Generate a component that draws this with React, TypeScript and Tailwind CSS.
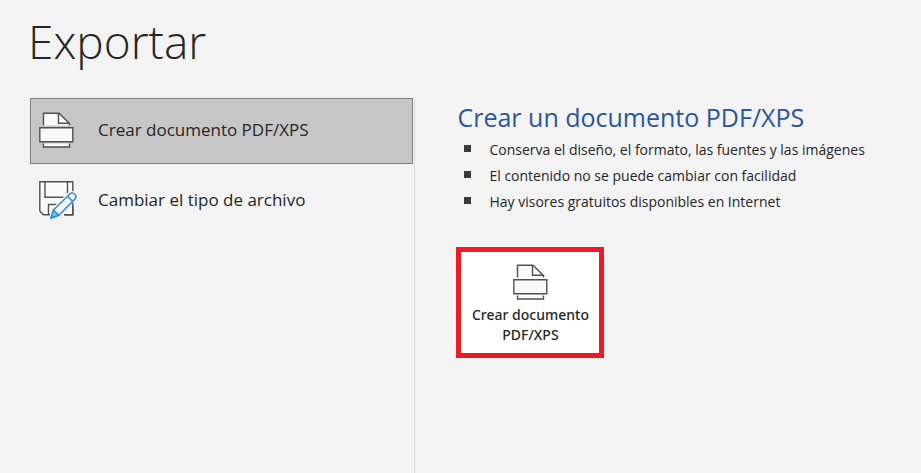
import clsx from 'clsx';
import type { ReactNode } from 'react';

const features = [
  'Conserva el diseño, el formato, las fuentes y las imágenes',
  'El contenido no se puede cambiar con facilidad',
  'Hay visores gratuitos disponibles en Internet',
];

const PrintDocumentIcon = () => (
  <svg
    className="h-9 w-[35px] shrink-0"
    viewBox="0 0 35 36"
    fill="none"
    stroke="#505050"
    strokeWidth="1.4"
    aria-hidden="true"
  >
    <path d="M4.5 13.5V1.2H20L30.5 11.500v2" fill="#fafafa" />
    <path d="M19.500 1.200v10h11" />
    <path d="M0.800 15.700h33v14h-33z" fill="#fafafa" />
    <path d="M4.500 31.500v3.500h26v-3.500" fill="#fafafa" />
  </svg>
);

const SaveAsIcon = () => (
  <svg
    className="h-[38px] w-[38px] shrink-0"
    viewBox="0 0 38 38"
    fill="none"
    aria-hidden="true"
  >
    <g stroke="#505050" strokeWidth="1.4">
      <path d="M0.8 0.8h33v33H4.5L0.8 30z" fill="#fafafa" />
      <path d="M6 0.8v15.5h22.5V0.8" />
      <path d="M9.5 33.5v-10H22" />
    </g>
    {/* clears the disk outline around the pencil */}
    <path d="M10 38l2.500-10L29 11.500q4-3 8.500 0v10L22 38z" fill="#f3f3f3" />
    <path d="M33.800 22v11.800H25" stroke="#505050" strokeWidth="1.4" />
    <g stroke="#2b8fd6" strokeWidth="1.5" strokeLinejoin="round">
      <path
        d="M12 37l2.500-8L31 12.700q2.400-1.800 4.700.500t.500 4.700L19.800 34.300z"
        fill="#fafafa"
      />
      <path d="M12 37l2.500-8 5.300 5.300z" fill="#83bbe6" />
      <path d="M28.500 15.200l5.200 5.200" />
    </g>
  </svg>
);

type OptionProps = {
  icon: ReactNode;
  label: string;
  selected?: boolean;
};

const Option = ({ icon, label, selected = false }: OptionProps) => (
  <button
    type="button"
    aria-pressed={selected}
    className={clsx(
      'flex h-[66px] w-full items-center border px-2 pb-0.5 text-left text-[17px]',
      selected ? 'border-[#808080] bg-[#c6c6c6]' : 'border-transparent',
    )}
  >
    <span className="w-[59px] shrink-0">{icon}</span>
    <span>{label}</span>
  </button>
);

export default function App() {
  return (
    <div className="flex min-h-screen flex-col bg-[#f3f3f3] font-['Open_Sans','Noto_Sans',sans-serif] text-[#262626]">
      <h1 className="px-7 pt-1.5 pb-[22px] text-[46px] leading-[70px] font-light">
        Exportar
      </h1>
      <main className="flex flex-1">
        <nav
          aria-label="Exportar"
          className="flex w-[calc(45%+1px)] flex-col gap-1 border-r border-[#dcdcdc] pr-px pl-[30px]"
        >
          <Option
            icon={<PrintDocumentIcon />}
            label="Crear documento PDF/XPS"
            selected
          />
          <Option icon={<SaveAsIcon />} label="Cambiar el tipo de archivo" />
        </nav>
        <section className="flex-1 pl-[41px]">
          <h2 className="pt-[3px] pl-px text-[25px] leading-8 text-[#2b579a]">
            Crear un documento PDF/XPS
          </h2>
          <ul className="pt-1">
            {features.map((feature) => (
              <li
                key={feature}
                className="flex items-center gap-[18px] pl-2 text-[14px] leading-[26px]"
              >
                <span className="mb-1 size-[7px] shrink-0 bg-[#3b3b3b]" />
                {feature}
              </li>
            ))}
          </ul>
          <button
            type="button"
            className="mt-8 flex h-[111px] w-[148px] flex-col items-center border-5 border-[#ed1c24] bg-white pt-3 font-['Noto_Sans','Open_Sans',sans-serif] text-[14px] leading-5 font-medium"
          >
            <PrintDocumentIcon />
            <span className="pt-[5px]">
              Crear documento
              <br />
              PDF/XPS
            </span>
          </button>
        </section>
      </main>
    </div>
  );
}
